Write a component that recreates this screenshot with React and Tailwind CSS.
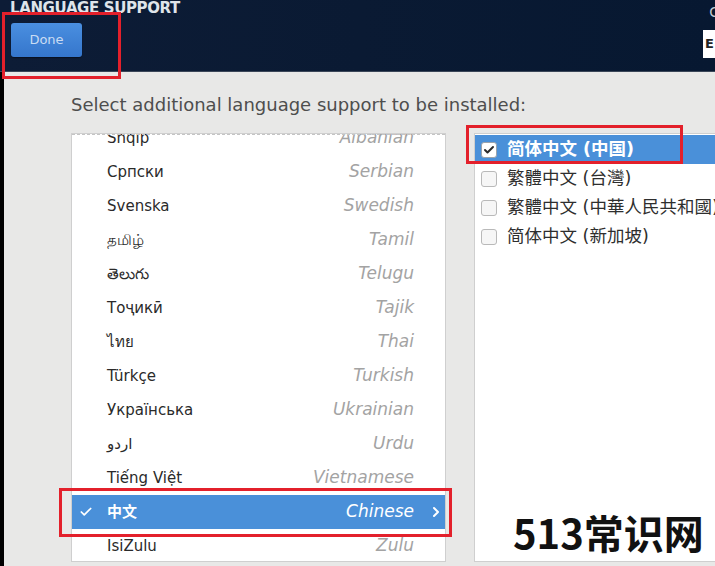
import { Check, ChevronRight } from 'lucide-react';

const langs = [
  ['Shqip', 'Albanian'],
  ['Српски', 'Serbian'],
  ['Svenska', 'Swedish'],
  ['தமிழ்', 'Tamil'],
  ['తెలుగు', 'Telugu'],
  ['Тоҷикӣ', 'Tajik'],
  ['ไทย', 'Thai'],
  ['Türkçe', 'Turkish'],
  ['Українська', 'Ukrainian'],
  ['اردو', 'Urdu'],
  ['Tiếng Việt', 'Vietnamese'],
  ['中文', 'Chinese', true],
  ['IsiZulu', 'Zulu'],
];

const locales = [
  ['简体中文 (中国)', true],
  ['繁體中文 (台灣)'],
  ['繁體中文 (中華人民共和國)'],
  ['简体中文 (新加坡)'],
];

const font = { fontFamily: '"DejaVu Sans", "Noto Sans", "Noto Sans CJK SC", sans-serif' };

function LangRow({ native, english, selected }) {
  return (
    <div
      className={`h-[34px] shrink-0 flex items-center pr-[31px] relative ${
        selected ? 'bg-[#4a90d9] text-white' : ''
      }`}
    >
      {selected && <Check className="absolute left-[7px] text-white" size={14} strokeWidth={3} />}
      <span className={`pl-[35px] text-[15px] ${selected ? 'text-white font-semibold' : 'text-[#2a2a2a]'}`}>{native}</span>
      <span className={`ml-auto italic text-[17px] ${selected ? 'text-white' : 'text-[#a3a3a3]'}`}>{english}</span>
      {selected && <ChevronRight className="absolute right-[1px] text-white" size={16} strokeWidth={3} />}
    </div>
  );
}

export default function App() {
  return (
    <div className="w-[715px] h-[566px] relative overflow-hidden flex flex-col bg-[#e8e8e7]" style={font}>
      <header className="h-[72px] shrink-0 bg-gradient-to-r from-[#0d1c36] via-[#0a1a33] to-[#071831] border-b border-[#3a4658] relative">
        <div className="pl-[10px] -mt-[3px] text-[15px] font-semibold text-[#dfe4ea] tracking-tight leading-[22px]">LANGUAGE SUPPORT</div>
        <button className="ml-[11px] mt-[4px] w-[71px] h-[34px] rounded-[3px] bg-gradient-to-b from-[#4a8fe0] to-[#3576cc] text-[#c9dcf3] text-[13px] shadow-[0_1px_1px_rgba(0,0,0,0.4)]">
          Done
        </button>
        <div className="absolute right-[-4px] top-[2px] text-[#c3c9d2] text-[14px]">C</div>
        <div className="absolute left-[703px] top-[30px] w-[20px] h-[28px] bg-white flex items-center pl-[2px] text-[13px] font-bold text-[#222]">E</div>
      </header>

      <main className="flex-1 flex flex-col border-l-4 border-black pl-[67px] min-h-0">
        <p className="mt-[21px] text-[18px] text-[#4e4e4e] leading-[24px]">
          Select additional language support to be installed:
        </p>
        <div className="mt-[16px] flex gap-[28px] flex-1 min-h-0 mb-[4px]">
          <div className="w-[375px] shrink-0 bg-white border border-[#cfcfcf] overflow-hidden relative">
            <div className="absolute top-0 left-0 right-0 border-t border-dashed border-[#c4c4c4] z-10" />
            <div className="-mt-[13px] flex flex-col">
              {langs.map(([n, e, s]) => (
                <LangRow key={e} native={n} english={e} selected={s} />
              ))}
            </div>
          </div>
          <div className="w-[260px] shrink-0 bg-white border border-[#cfcfcf] pt-[1px]">
            {locales.map(([label, sel]) => (
              <div
                key={label}
                className={`h-[29px] flex items-center gap-[10px] pl-[6px] whitespace-nowrap ${
                  sel ? 'bg-[#4a90d9] h-[28px]' : ''
                }`}
              >
                <span
                  className={`w-[16px] h-[16px] rounded-[3px] flex items-center justify-center shrink-0 ${
                    sel ? 'bg-white border border-[#9aa3ad]' : 'bg-[#f6f6f6] border border-[#b9b9b9]'
                  }`}
                >
                  {sel && <Check size={12} strokeWidth={4} className="text-[#2b2b2b]" />}
                </span>
                <span className={`text-[17.5px] ${sel ? 'text-white font-semibold' : 'text-[#2e2e2e]'}`}>{label}</span>
              </div>
            ))}
          </div>
        </div>
      </main>

      <div className="absolute left-[2px] top-[12px] w-[119px] h-[67px] border-[3px] border-[#e3202b] pointer-events-none" />
      <div className="absolute left-[466px] top-[125px] w-[217px] h-[39px] border-[3px] border-[#e3202b] pointer-events-none" />
      <div className="absolute left-[59px] top-[488px] w-[393px] h-[49px] border-[3px] border-[#e3202b] pointer-events-none" />

      <div
        className="absolute left-[513px] top-[506px] text-[40px] font-bold text-[#111] leading-[52px]"
        style={{ fontFamily: '"Noto Sans CJK SC", sans-serif' }}
      >
        513常识网
      </div>
    </div>
  );
}
